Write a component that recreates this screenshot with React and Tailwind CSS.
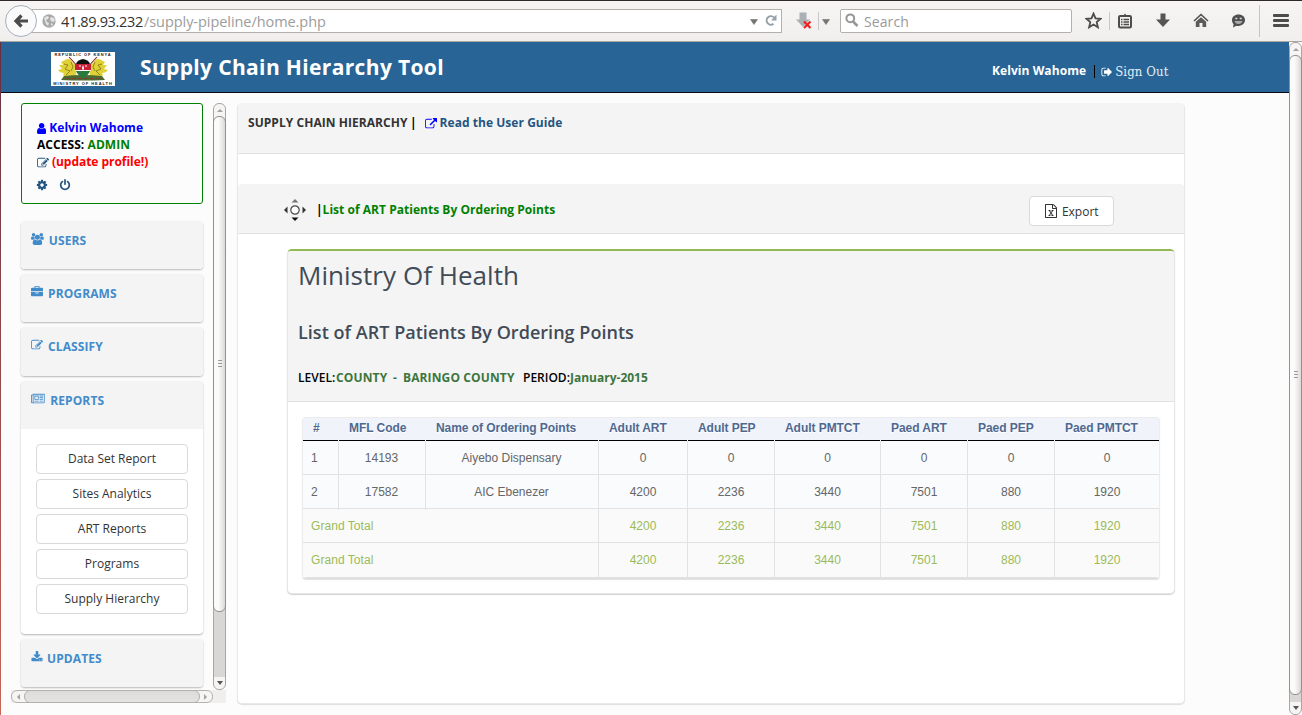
import React from "react";

const GLYPHS = {
  user: [1280, "M1280 1399q0 109-62.5 187t-150.5 78h-854q-88 0-150.5-78t-62.5-187q0-85 8.5-160.5t31.5-152 58.5-131 94-89 134.5-34.5q131 128 313 128t313-128q76 0 134.5 34.5t94 89 58.5 131 31.5 152 8.5 160.5zm-256-887q0 159-112.5 271.5t-271.5 112.5-271.5-112.5-112.5-271.5 112.5-271.5 271.5-112.5 271.5 112.5 112.5 271.5z"],
  edit: [1792, "M888 1184l116-116-152-152-116 116v56h96v96h56zm440-720q-16-16-33 1l-350 350q-17 17-1 33t33-1l350-350q17-17 1-33zm80 594v190q0 119-84.5 203.5t-203.5 84.5h-832q-119 0-203.5-84.5t-84.5-203.5v-832q0-119 84.5-203.5t203.5-84.5h832q63 0 117 25 15 7 18 23 3 17-9 29l-49 49q-14 14-32 8-23-6-45-6h-832q-66 0-113 47t-47 113v832q0 66 47 113t113 47h832q66 0 113-47t47-113v-126q0-13 9-22l64-64q15-15 35-7t20 29zm-96-738l288 288-672 672h-288v-288zm444 132l-92 92-288-288 92-92q28-28 68-28t68 28l152 152q28 28 28 68t-28 68z"],
  external: [1792, "M1408 928v320q0 119-84.5 203.5t-203.5 84.5h-832q-119 0-203.5-84.5t-84.5-203.5v-832q0-119 84.5-203.5t203.5-84.5h704q14 0 23 9t9 23v64q0 14-9 23t-23 9h-704q-66 0-113 47t-47 113v832q0 66 47 113t113 47h832q66 0 113-47t47-113v-320q0-14 9-23t23-9h64q14 0 23 9t9 23zm384-864v512q0 26-19 45t-45 19-45-19l-176-176-652 652q-10 10-23 10t-23-10l-114-114q-10-10-10-23t10-23l652-652-176-176q-19-19-19-45t19-45 45-19h512q26 0 45 19t19 45z"],
  signOut: [1664, "M704 1440q0 4 1 20t.5 26.5-3 23.5-10 19.5-20.5 6.5h-320q-119 0-203.5-84.5t-84.5-203.5v-704q0-119 84.5-203.5t203.5-84.5h320q13 0 22.5 9.5t9.5 22.5q0 4 1 20t.5 26.5-3 23.5-10 19.5-20.5 6.5h-320q-66 0-113 47t-47 113v704q0 66 47 113t113 47h312l11.5 1 11.5 3 8 5.5 7 9 2 13.5zm928-544q0 26-19 45l-544 544q-19 19-45 19t-45-19-19-45v-288h-448q-26 0-45-19t-19-45v-384q0-26 19-45t45-19h448v-288q0-26 19-45t45-19 45 19l544 544q19 19 19 45z"],
  cog: [1792, "M1152 896q0-106-75-181t-181-75-181 75-75 181 75 181 181 75 181-75 75-181zm512-109v222q0 12-8 23t-20 13l-185 28q-19 54-39 91 35 50 107 138 10 12 10 25t-9 23q-27 37-99 108t-94 71q-12 0-26-9l-138-108q-44 23-91 38-16 136-29 186-7 28-36 28h-222q-14 0-24.5-8.5t-11.5-21.5l-28-184q-49-16-90-37l-141 107q-10 9-25 9-14 0-25-11-126-114-165-168-7-10-7-23 0-12 8-23 15-21 51-66.5t54-70.5q-27-50-41-99l-183-27q-13-2-21-12.5t-8-23.5v-222q0-12 8-23t19-13l186-28q14-46 39-92-40-57-107-138-10-12-10-24 0-10 9-23 26-36 98.5-107.5t94.5-71.5q13 0 26 10l138 107q44-23 91-38 16-136 29-186 7-28 36-28h222q14 0 24.5 8.5t11.5 21.5l28 184q49 16 90 37l142-107q9-9 24-9 13 0 25 10 129 119 165 170 7 8 7 22 0 12-8 23-15 21-51 66.5t-54 70.5q26 50 41 98l183 28q13 2 21 12.5t8 23.5z"],
  power: [1792, "M1664 896q0 156-61 298t-164 245-245 164-298 61-298-61-245-164-164-245-61-298q0-182 80.5-343t226.5-270q43-32 95.5-25t83.5 50q32 42 24.5 94.5t-49.5 84.5q-98 74-151.5 181t-53.5 228q0 104 40.5 198.5t109.5 163.5 163.5 109.5 198.5 40.5 198.5-40.5 163.5-109.5 109.5-163.5 40.5-198.5q0-121-53.5-228t-151.5-181q-42-32-49.5-84.5t24.5-94.5q31-43 84-50t95 25q146 109 226.5 270t80.5 343zm-640-768v640q0 52-38 90t-90 38-90-38-38-90v-640q0-52 38-90t90-38 90 38 38 90z"],
  briefcase: [1792, "M640 256h512v-128h-512v128zm1152 640v480q0 66-47 113t-113 47h-1472q-66 0-113-47t-47-113v-480h672v160q0 26 19 45t45 19h320q26 0 45-19t19-45v-160h672zm-768 0v128h-256v-128h256zm768-480v384h-1792v-384q0-66 47-113t113-47h352v-160q0-40 28-68t68-28h576q40 0 68 28t28 68v160h352q66 0 113 47t47 113z"],
  download: [1792, "M1344 1344q0-26-19-45t-45-19-45 19-19 45 19 45 45 19 45-19 19-45zm256 0q0-26-19-45t-45-19-45 19-19 45 19 45 45 19 45-19 19-45zm128-224v320q0 40-28 68t-68 28h-1472q-40 0-68-28t-28-68v-320q0-40 28-68t68-28h465l135 136q58 56 136 56t136-56l136-136h464q40 0 68 28t28 68zm-325-569q17 41-14 70l-448 448q-18 19-45 19t-45-19l-448-448q-31-29-14-70 17-39 59-39h256v-448q0-26 19-45t45-19h256q26 0 45 19t19 45v448h256q42 0 59 39z"],
  newspaper: [2048, "M1024 512h-384v384h384v-384zm128 640v128h-640v-128h640zm0-768v640h-640v-640h640zm640 768v128h-512v-128h512zm0-256v128h-512v-128h512zm0-256v128h-512v-128h512zm0-256v128h-512v-128h512zm-1536 960v-960h-128v960q0 26 19 45t45 19 45-19 19-45zm1664 0v-1088h-1536v1088q0 33-11 64h1483q26 0 45-19t19-45zm128-1216v1216q0 80-56 136t-136 56h-1664q-80 0-136-56t-56-136v-1088h256v-128h1792z"],
  users: [1920, "M593 896q-162 5-265 128h-134q-82 0-138-40.5t-56-118.5q0-353 124-353 6 0 43.5 21t97.5 42.5 119 21.5q67 0 133-23-5 37-5 66 0 139 81 256zm1071 637q0 120-73 189.5t-194 69.5h-874q-121 0-194-69.5t-73-189.5q0-53 3.5-103.5t14-109 26.5-108.5 43-97.5 62-81 85.5-53.5 111.5-20q10 0 43 21.5t73 48 107 48 135 21.5 135-21.5 107-48 73-48 43-21.5q61 0 111.5 20t85.5 53.5 62 81 43 97.5 26.5 108.5 14 109 3.5 103.5zm-1024-1277q0 106-75 181t-181 75-181-75-75-181 75-181 181-75 181 75 75 181zm704 384q0 159-112.5 271.5t-271.5 112.5-271.5-112.5-112.5-271.5 112.5-271.5 271.5-112.5 271.5 112.5 112.5 271.5zm576 225q0 78-56 118.5t-138 40.5h-134q-103-123-265-128 81-117 81-256 0-29-5-66 66 23 133 23 59 0 119-21.5t97.5-42.5 43.5-21q124 0 124 353zm-128-609q0 106-75 181t-181 75-181-75-75-181 75-181 181-75 181 75 75 181z"],
  excel: [1792, "M1596 380q28 28 48 76t20 88v1152q0 40-28 68t-68 28h-1344q-40 0-68-28t-28-68v-1600q0-40 28-68t68-28h896q40 0 88 20t76 48zm-444-244v376h376q-10-29-22-41l-313-313q-12-12-41-22zm384 1528v-1024h-416q-40 0-68-28t-28-68v-416h-768v1536h1280zm-979-234v106h281v-106h-75l103-161q5-7 10-16.5t7.5-13.5 3.5-4h2q1 4 5 10 2 4 4.500 7.500t6 8 6.500 8.500l107 161h-76v106h291v-106h-68l-192-273 195-282h67v-107h-279v107h74l-103 159q-4 7-10 16.500t-9 13.500l-2 3h-2q-1-4-5-10-6-11-17-23l-106-159h76v-107h-290v107h68l189 272-194 283h-68z"],
};

function Icon({ name, size = 12, className = "" }) {
  const [w, d] = GLYPHS[name];
  return (
    <svg className={"shrink-0 " + className} width={(size * w) / 1792} height={size} viewBox={`0 0 ${w} 1792`} fill="currentColor">
      <path d={d} />
    </svg>
  );
}

const Caret = ({ className = "" }) => (
  <svg className={"shrink-0 " + className} width="8" height="6" viewBox="0 0 8 6">
    <path d="M0.500 0.500h7L4 5.500z" fill="#737371" stroke="#737371" strokeWidth=".6" />
  </svg>
);

function BrowserBar() {
  return (
    <div className="flex h-[42px] w-full items-center border-b border-[#aaa7a3] bg-gradient-to-b from-[#f6f5f4] to-[#f0efee] shadow-[inset_0_1px_0_#2f2a29]">
      <div className="z-10 ml-[5px] flex size-8 shrink-0 items-center justify-center rounded-full border border-[#a6b0bc] bg-[#fafafa]">
        <svg width="16" height="16" viewBox="0 0 16 16">
          <path d="M8.500 2.500L3 8l5.500 5.500M3.500 8H15" fill="none" stroke="#4c4c4c" strokeWidth="3.200" />
        </svg>
      </div>
      <div className="-ml-[6px] flex h-6 w-[751px] shrink-0 items-center border border-[#b4b1ad] bg-white font-['Open_Sans',sans-serif] text-[14.500px]">
        <svg className="ml-[10px]" width="14" height="14" viewBox="0 0 14 14">
          <circle cx="7" cy="7" r="6.700" fill="#a9a9a9" />
          <path d="M2 4l3-2 2 1-1 2-2 1 1 2 2 1-1 3-2-2-1-3zM9 3l3 1 1 3-2 1-2-1-1-2zM9 9l2 1-1 2-1-1z" fill="#e4e4e4" />
        </svg>
        <span className="mt-[2px] ml-[5px] w-[83px] tracking-[-0.350px] whitespace-pre text-[#333]">41.89.93.232</span>
        <span className="mt-[2px] tracking-[-0.060px] whitespace-pre text-[#9c9c9c]">/supply-pipeline/home.php</span>
        <span className="grow" />
        <Caret className="mt-[2px] mr-[7px]" />
        <svg className="mr-[4px]" width="12" height="13" viewBox="0 0 12 13">
          <path d="M8.500 9.900A4.300 4.300 0 1 1 9 3.400" fill="none" stroke="#97a1aa" strokeWidth="2" />
          <path d="M11.500 0.500v6H6z" fill="#97a1aa" />
        </svg>
      </div>
      <svg className="ml-[14px] shrink-0" width="16" height="17" viewBox="0 0 16 17">
        <path d="M3.500 0.500h7v7H14L7 15 0 7.500h3.500z" fill="#aab0b4" />
        <path d="M8 9.500l6.500 6.500M14.500 9.500l-6.500 6.500" stroke="#f02020" strokeWidth="2.200" />
      </svg>
      <div className="ml-[6px] h-[18px] w-px shrink-0 bg-[#c4c8cb]" />
      <Caret className="mt-[2px] ml-[3px]" />
      <div className="ml-[10px] flex h-6 w-[232px] shrink-0 items-center rounded-[2px] border border-[#b4b1ad] bg-white">
        <svg className="ml-[4px]" width="14" height="15" viewBox="0 0 14 15">
          <circle cx="5.300" cy="5.300" r="3.900" fill="none" stroke="#979797" strokeWidth="2" />
          <path d="M8 8.500l4.500 4.500" stroke="#979797" strokeWidth="2.500" />
        </svg>
        <span className="mt-px ml-[5px] font-['Open_Sans',sans-serif] text-[14px] tracking-[0.100px] text-[#9a9a9a]">Search</span>
      </div>
      <svg className="ml-[13px] shrink-0" width="17" height="17" viewBox="0 0 17 17">
        <path d="M8.500 1.600l2 4.800 5.100.4-3.900 3.300 1.200 5.200-4.400-2.800-4.400 2.800 1.200-5.200-3.900-3.300 5.100-.4z" fill="none" stroke="#4c4c4c" strokeWidth="1.800" />
      </svg>
      <div className="ml-[7px] h-[18px] w-px shrink-0 bg-[#c4c8cb]" />
      <svg className="ml-[8px] shrink-0" width="14" height="16" viewBox="0 0 14 16">
        <rect x="1" y="3" width="12" height="11.500" rx="1.200" fill="none" stroke="#4c4c4c" strokeWidth="2" />
        <path d="M4 4V2.500h1.500L7 .5l1.500 2H10V4z" fill="#4c4c4c" />
        <path d="M3 6.500h1.500M5.500 6.500H11M3 9h1.500M5.500 9H11M3 11.500h1.500M5.500 11.500H11" stroke="#4c4c4c" strokeWidth="1.400" />
      </svg>
      <svg className="ml-[24px] shrink-0" width="14" height="15" viewBox="0 0 14 15">
        <path d="M4.500.5h5v6H14L7 14 0 6.500h4.500z" fill="#555" />
      </svg>
      <svg className="ml-[23px] shrink-0" width="16" height="15" viewBox="0 0 16 15">
        <path d="M1 8l7-6.500L15 8" fill="none" stroke="#4f4f4f" strokeWidth="1.600" />
        <path d="M2.800 8.800L8 4.300l5.200 4.500V14H9.500v-4h-3v4H2.800z" fill="#5a5a5a" />
      </svg>
      <svg className="mt-px ml-[22px] shrink-0" width="15" height="14" viewBox="0 0 15 14">
        <path d="M7.500.5c4 0 6.500 2.400 6.500 5.600s-2.500 5.800-6.500 5.800c-.7 0-1.400-.1-2-.2L2 13.500l.6-3.200C1.500 9.300 1 7.800 1 6.100 1 2.900 3.500.5 7.500.5z" fill="#4f4f4f" />
        <path d="M4.300 4.500h2M8.700 4.500h2" stroke="#ddd" strokeWidth="1.300" />
        <path d="M3.500 7h8c-.5 2-2 3-4 3s-3.500-1-4-3z" fill="#aaa" />
      </svg>
      <div className="ml-[13px] h-[32px] w-px shrink-0 bg-[#c0c6cb]" />
      <div className="ml-[13px] flex flex-col gap-[2px]">
        <div className="h-[3px] w-[16px] rounded-[1px] bg-[#4c4c4c]" />
        <div className="h-[3px] w-[16px] rounded-[1px] bg-[#4c4c4c]" />
        <div className="h-[3px] w-[16px] rounded-[1px] bg-[#4c4c4c]" />
      </div>
    </div>
  );
}

function CoatOfArms() {
  return (
    <div className="flex h-[34px] w-[64px] shrink-0 flex-col items-center justify-between bg-white font-['Liberation_Sans',sans-serif] text-[4px] leading-[5px] font-bold text-[#222]">
      <span className="whitespace-nowrap tracking-[0.900px]">REPUBLIC OF KENYA</span>
      <svg width="54" height="24" viewBox="0 0 54 24">
        <path d="M13 0l12 13M41 0L29 13" stroke="#8c2430" strokeWidth="1.100" />
        <path d="M9 3q3-2 6 0 1 3 4 4l2 5-1 4 1 4H9q-3-2-1-4-4 0-6-3l4-1-3-4 4 0-2-3z" fill="#e0d136" />
        <path d="M45 3q-3-2-6 0-1 3-4 4l-2 5 1 4-1 4h12q3-2 1-4 4 0 6-3l-4-1 3-4-4 0 2-3z" fill="#e0d136" />
        <path d="M8 7l4 1-3 4 5 2-4 4M46 7l-4 1 3 4-5 2 4 4M15 5l2 5-2 4M39 5l-2 5 2 4" fill="none" stroke="#80701c" strokeWidth=".8" />
        <path d="M8 19q19-2 38 0l3 4q-22 1-44 0z" fill="#4d6a35" />
        <path d="M10 21.500h34" stroke="#8a3a30" strokeWidth="1.200" strokeDasharray="4 2" />
        <path d="M20 7q1-4 7-5 6 1 7 5z" fill="#111" />
        <path d="M19 7h16v6H19z" fill="#c81f38" />
        <path d="M20 14h14q-2 5-7 7-5-2-7-7z" fill="#2a7a3e" />
        <path d="M19 13.500h16" stroke="#fff" strokeWidth=".8" />
        <path d="M23 9h2M29 9h2" stroke="#fff" strokeWidth="1" />
        <path d="M27 8l1 3-1 3-1-3z" fill="#fff" />
      </svg>
      <span className="whitespace-nowrap tracking-[0.950px]">MINISTRY OF HEALTH</span>
    </div>
  );
}

function Header() {
  return (
    <div className="flex h-[51px] items-start border-b border-[#0a0a14] bg-[#286596] text-white">
      <div className="mt-[10px] ml-[50px]">
        <CoatOfArms />
      </div>
      <h1 className="mt-[10px] ml-[25px] text-[21px] leading-[30px] font-bold tracking-[0.350px] whitespace-nowrap">Supply Chain Hierarchy Tool</h1>
      <div className="mt-[19px] ml-auto flex w-[297px] items-center whitespace-nowrap text-[12px] leading-[18px]">
        <span className="w-[102px] tracking-[0.070px] font-bold">Kelvin Wahome</span>
        <span className="mt-px h-[13px] w-px bg-black" />
        <Icon name="signOut" className="mt-[2px] ml-[6px]" />
        <span className="mt-[2px] ml-[3px] font-['DejaVu_Serif_Condensed','DejaVu_Serif',serif] text-[13px] tracking-[0.130px] text-[#e4eef6]">Sign Out</span>
      </div>
    </div>
  );
}

function Triangle({ dir, dark }) {
  const d = { up: "M0 4h6L3 1z", down: "M0 1h6L3 5z", left: "M5 0v6L2 3z", right: "M1 0v6l3-3z" }[dir];
  return (
    <svg width="6" height="6" viewBox="0 0 6 6">
      <path d={d} fill={dark ? "#555" : "#a2a2a0"} />
    </svg>
  );
}

function VerticalScrollbar({ className, thumb }) {
  return (
    <div className={"flex w-[13px] shrink-0 flex-col rounded-[6px] border border-[#a8a6a3] bg-[#d9d7d5] " + className}>
      <div className="-mb-[5px] flex h-[17px] shrink-0 items-start justify-center rounded-t-[6px] bg-[#f6f5f4] pt-[4px]">
        <Triangle dir="up" />
      </div>
      <div className={"-mx-px flex shrink-0 flex-col items-center justify-center gap-[2px] rounded-[6px] border border-[#93918f] bg-gradient-to-r from-[#fbfbfa] from-40% to-[#dcdad8] pb-[2px] " + thumb}>
        <div className="h-px w-[4px] bg-[#999]" />
        <div className="h-px w-[4px] bg-[#999]" />
        <div className="h-px w-[4px] bg-[#999]" />
      </div>
      <div className="mt-auto flex h-[12px] items-center justify-center rounded-b-[6px] bg-[#f6f5f4]">
        <Triangle dir="down" dark />
      </div>
    </div>
  );
}

function MenuCard({ icon, label, className, iconGap, children }) {
  return (
    <div className={"ml-px w-[182px] overflow-hidden rounded-[4px] bg-white shadow-[0_1px_2px_rgba(0,0,0,0.280)] " + className}>
      <div className="flex h-[49px] bg-[#f4f4f4] pt-[11px] pl-[10px] text-[12px] leading-[18px] font-bold tracking-[0.110px] text-[#428bca]">
        <Icon name={icon} className="mt-px" />
        <span className={iconGap}>{label}</span>
      </div>
      {children}
    </div>
  );
}

const REPORTS = ["Data Set Report", "Sites Analytics", "ART Reports", "Programs", "Supply Hierarchy"];

function Sidebar() {
  return (
    <div className="mt-[10px] ml-[10px] w-[215px] shrink-0">
      <div className="flex h-[587px]">
        <div className="w-[202px] shrink-0 overflow-hidden pl-[9px]">
          <div className="ml-px h-[101px] w-[182px] rounded-[3px] border border-[#008000] bg-[#fcfcfc] pt-[15px] pl-[15px] text-[12px] leading-[17px] font-bold whitespace-nowrap">
            <div className="flex items-center text-[#0000ff]">
              <Icon name="user" size={13} className="mt-px" />
              <span className="ml-[3px] tracking-[0.040px]">Kelvin Wahome</span>
            </div>
            <div className="text-black">
              <span className="tracking-[0.060px]">ACCESS: </span>
              <span className="tracking-[0.080px] text-[#008000]">ADMIN</span>
            </div>
            <div className="flex items-center text-[#ff0000]">
              <Icon name="edit" className="mt-[2px] text-[#245580]" />
              <span className="ml-[3px] tracking-[-0.040px]">(update profile!)</span>
            </div>
            <div className="mt-[9px] -ml-px flex gap-[11px] text-[#245580]">
              <Icon name="cog" />
              <Icon name="power" />
            </div>
          </div>
          <MenuCard icon="users" label="USERS" iconGap="ml-[5px]" className="mt-[17px] h-[48px]" />
          <MenuCard icon="briefcase" label="PROGRAMS" iconGap="ml-[5px]" className="mt-[5px] h-[48px]" />
          <MenuCard icon="edit" label="CLASSIFY" iconGap="ml-[5px]" className="mt-[5px] h-[49px]" />
          <MenuCard icon="newspaper" label="REPORTS" iconGap="ml-[5.500px]" className="mt-[5px] h-[253px]">
            <div className="-mt-px flex flex-col gap-[5px] bg-white px-[15px] pt-[15px]">
              {REPORTS.map((r) => (
                <div key={r} className="h-[30px] rounded-[4px] border border-[#d9d9d9] bg-white text-center text-[12px] leading-[27px] text-[#333]">
                  {r}
                </div>
              ))}
            </div>
          </MenuCard>
          <MenuCard icon="download" label="UPDATES" iconGap="ml-[4px]" className="mt-[5px] h-[48px]" />
        </div>
        <VerticalScrollbar className="h-[587px]" thumb="h-[496px]" />
      </div>
      <div className="flex h-[13px] bg-[#f0efee]">
        <div className="flex w-[202px] items-center justify-between rounded-[6px] border border-[#b4b2af] bg-[#f6f5f4] px-[3px]">
          <Triangle dir="left" />
          <div className="h-[13px] w-[176px] shrink-0 rounded-[6px] border border-[#b4b2af] bg-gradient-to-b from-[#dedcda] to-[#e4e3e1]" />
          <Triangle dir="right" />
        </div>
      </div>
    </div>
  );
}

const COLUMNS = ["#", "MFL Code", "Name of Ordering Points", "Adult ART", "Adult PEP", "Adult PMTCT", "Paed ART", "Paed PEP", "Paed PMTCT"];
const ROWS = [
  ["1", "14193", "Aiyebo Dispensary", "0", "0", "0", "0", "0", "0"],
  ["2", "17582", "AIC Ebenezer", "4200", "2236", "3440", "7501", "880", "1920"],
];
const TOTALS = ["4200", "2236", "3440", "7501", "880", "1920"];
const GRID = "grid grid-cols-[36px_87px_173px_89px_87px_106px_87px_87px_104px]";

function DataTable() {
  return (
    <div className="mt-[15px] ml-[14px] w-[858px] overflow-hidden rounded-[4px] border border-[#ececec] border-b-[#dedede] font-['Liberation_Sans',Arial,sans-serif] text-[12px] shadow-[0_1px_1px_rgba(0,0,0,0.120)]">
      <div className={GRID + " h-[23px] bg-[#f0f4fa] leading-[21px] font-bold text-[#4f6890]"}>
        {COLUMNS.map((c) => (
          <div key={c} className="group flex whitespace-nowrap">
            <div className="w-0 grow border-b border-black pl-[10px] tracking-[-0.050px] [text-shadow:0_1px_0_#fff]">{c}</div>
            <div className="w-px group-last:w-0" />
          </div>
        ))}
      </div>
      {ROWS.map((r) => (
        <div key={r[0]} className={GRID + " h-[34px] border-b border-[#e2e2e2] bg-[#f9fbfd] text-center leading-[35px] text-[#666]"}>
          {r.map((c, i) => (
            <div key={i} className={i === 0 ? "border-r border-[#e2e2e2] pl-[8px] text-left" : i < 3 ? "border-r border-[#e2e2e2] pr-px" : "border-r border-[#e2e2e2] last:border-r-0"}>
              {c}
            </div>
          ))}
        </div>
      ))}
      {[0, 1].map((n) => (
        <div key={n} className={GRID + " h-[34px] border-b border-[#e2e2e2] bg-[#fafafa] text-center leading-[35px] text-[#9bbb59] last:h-[35px]"}>
          <div className="col-span-3 border-r border-[#e2e2e2] pl-[8px] text-left tracking-[0.050px]">Grand Total</div>
          {TOTALS.map((c, i) => (
            <div key={i} className="border-r border-[#e2e2e2] last:border-r-0">
              {c}
            </div>
          ))}
        </div>
      ))}
    </div>
  );
}

function MoveIcon() {
  return (
    <svg className="shrink-0" width="22" height="22" viewBox="0 0 22 22">
      <circle cx="11" cy="11" r="4.200" fill="#fff" stroke="#4a4a4a" strokeWidth="1.200" />
      <path d="M7.500 3.500h7L11 0z" fill="#777" />
      <path d="M7.500 18.500h7L11 22z" fill="#111" />
      <path d="M3.500 7.500v7L0 11z" fill="#333" />
      <path d="M18.500 7.500v7L22 11z" fill="#333" />
    </svg>
  );
}

function Main() {
  return (
    <div className="mt-[10px] ml-[11px] h-[601px] w-[948px] shrink-0 rounded-[5px] border border-[#e8e8e8] border-t-[#f4f4f4] bg-white shadow-[0_1px_1px_rgba(0,0,0,0.120)] font-['Open_Sans',sans-serif]">
      <div className="flex h-[50px] rounded-t-[4px] border-b border-[#e2e2e2] bg-[#f4f4f4] pt-[10px] pl-[10px] text-[12px] leading-[18px] font-bold whitespace-nowrap">
        <span className="w-[162px] tracking-[0.050px] text-[#333]">SUPPLY CHAIN HIERARCHY</span>
        <span className="text-black">|</span>
        <Icon name="external" className="mt-[4px] ml-[8px] text-[#0000ff]" />
        <span className="ml-[3px] tracking-[0.040px] text-[#245580]">Read the User Guide</span>
      </div>
      <div className="mt-[30px] flex h-[50px] rounded-t-[4px] border-b border-[#e2e2e2] bg-[#f4f4f4]">
        <div className="mt-[15px] ml-[46px]">
          <MoveIcon />
        </div>
        <div className="mt-[17px] ml-[10px] flex text-[12px] leading-[18px] font-bold whitespace-nowrap">
          <span className="text-black">|</span>
          <span className="tracking-[0.030px] text-[#008000]">List of ART Patients By Ordering Points</span>
        </div>
        <div className="mt-[12px] mr-[70px] ml-auto flex h-[30px] w-[85px] justify-center rounded-[4px] border border-[#d9d9d9] bg-white text-[12px] leading-[29px] text-[#333]">
          <Icon name="excel" size={14} className="mt-[7px]" />
          <span className="ml-[3.500px]">Export</span>
        </div>
      </div>
      <div className="mt-[15px] ml-[49px] h-[345px] w-[888px] rounded-[5px] border border-t-2 border-[#e6e6e6] border-t-[#91b954] bg-white shadow-[0_1px_1px_rgba(0,0,0,0.180)]">
        <div className="h-[151px] rounded-t-[3px] border-b border-[#e2e2e2] bg-[#f4f4f4] pl-[10px] whitespace-nowrap">
          <h2 className="pt-[6px] text-[26px] leading-[36px] tracking-[0.040px] text-[#414b57]">Ministry Of Health</h2>
          <h3 className="pt-[26px] text-[18px] leading-[26px] font-semibold tracking-[0.030px] text-[#414b57]">List of ART Patients By Ordering Points</h3>
          <div className="flex pt-[24px] text-[12px] leading-[18px] font-bold text-[#3c763d]">
            <span className="w-[38px] font-semibold text-black">LEVEL:</span>
            <span className="w-[57px] tracking-[0.150px]">COUNTY</span>
            <span className="w-[10px]">-</span>
            <span className="w-[120px] tracking-[0.120px]">BARINGO COUNTY</span>
            <span className="w-[47px] font-semibold text-black">PERIOD:</span>
            <span>January-2015</span>
          </div>
        </div>
        <DataTable />
      </div>
    </div>
  );
}

export default function App() {
  return (
    <div className="flex h-[715px] w-[1302px] flex-col overflow-hidden bg-[#fcfcfc] font-['Open_Sans',sans-serif]">
      <BrowserBar />
      <div className="flex grow">
        <div className="w-px shrink-0 bg-gradient-to-b from-[#653040] to-[#c66658]" />
        <div className="w-[1288px] shrink-0">
          <Header />
          <div className="flex">
            <Sidebar />
            <Main />
          </div>
        </div>
        <VerticalScrollbar className="h-[673px]" thumb="h-[640px]" />
      </div>
    </div>
  );
}
